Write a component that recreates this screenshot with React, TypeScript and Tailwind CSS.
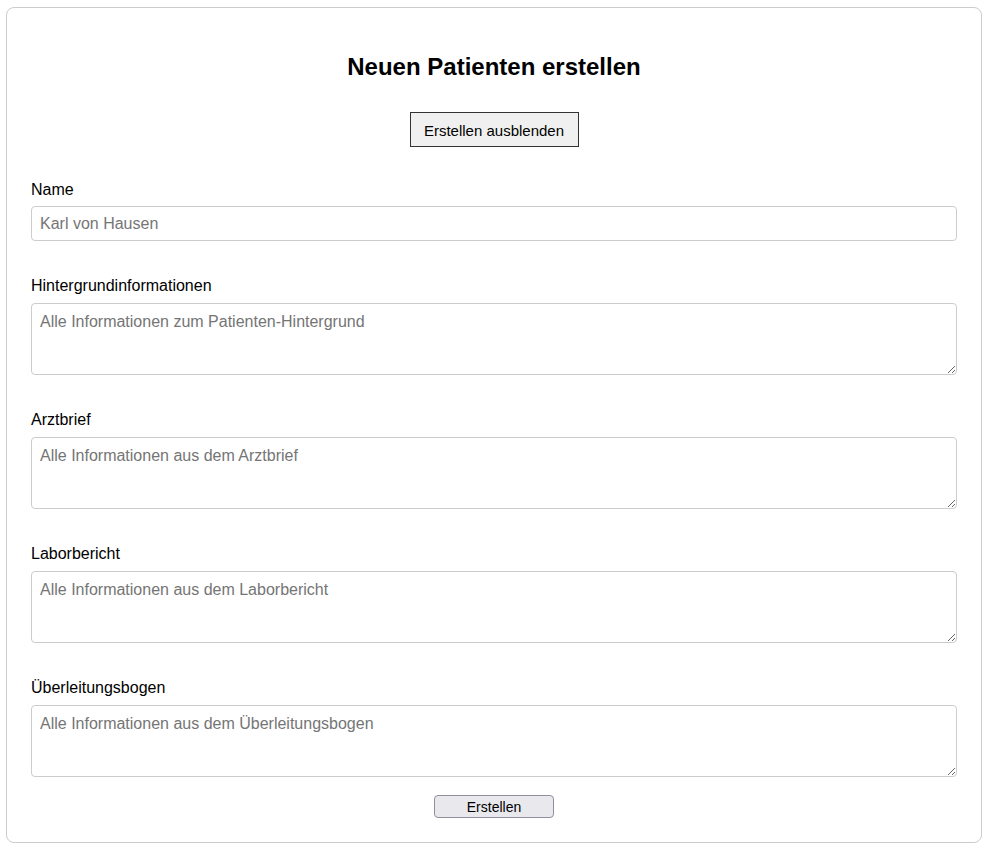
const fields = [
	{ label: "Hintergrundinformationen", placeholder: "Alle Informationen zum Patienten-Hintergrund" },
	{ label: "Arztbrief", placeholder: "Alle Informationen aus dem Arztbrief" },
	{ label: "Laborbericht", placeholder: "Alle Informationen aus dem Laborbericht" },
	{ label: "Überleitungsbogen", placeholder: "Alle Informationen aus dem Überleitungsbogen" },
];

export default function App() {
	return (
		<div className="bg-white pl-[6px] pr-[7px] pt-[7px] pb-[7px] font-['Liberation_Sans',Arial,sans-serif] text-black">
			<div className="flex flex-col rounded-lg border border-[#cccccc] px-6 pt-[43px] pb-6">
				<h2 className="text-center text-2xl font-bold leading-8">Neuen Patienten erstellen</h2>
				<div className="mt-[29px] flex justify-center">
					<button className="h-[35px] w-[169px] border border-[#333333] bg-[#f0f0f0] pt-[3px] text-[15px] text-black">
						Erstellen ausblenden
					</button>
				</div>

				<label className="mt-[31px] mb-[4px] text-base leading-6">Name</label>
				<input
					className="h-[35px] w-full rounded border border-[#cccccc] px-2 text-base outline-none placeholder:text-[#757575]"
					placeholder="Karl von Hausen"
				/>

				{fields.map((f) => (
					<div key={f.label} className="mt-[33px] flex flex-col">
						<label className="mb-[5px] text-base leading-6">{f.label}</label>
						<textarea
							className="h-[72px] w-full rounded border border-[#cccccc] px-2 py-2 text-base leading-5 outline-none placeholder:text-[#757575]"
							placeholder={f.placeholder}
						/>
					</div>
				))}

				<div className="mt-[18px] flex justify-center">
					<button className="h-[23px] w-[120px] rounded border border-[#8f8f9d] bg-[#e9e9ed] text-[14px] leading-none text-black">
						Erstellen
					</button>
				</div>
			</div>
		</div>
	);
}
